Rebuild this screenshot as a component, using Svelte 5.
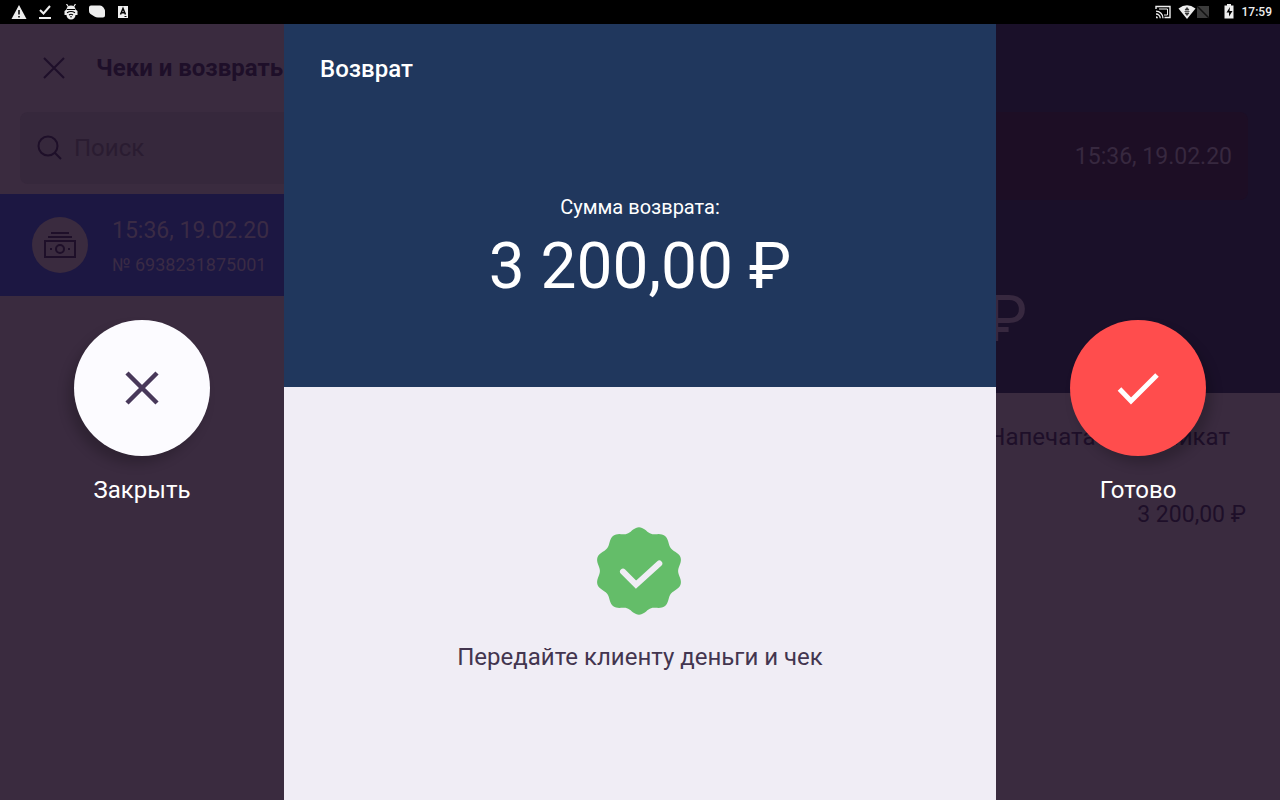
<script lang="ts">
	const total = '3 200,00 ₽'
	const receiptTime = '15:36, 19.02.20'

	// scalloped edge of the green badge
	function scallop(bumps: number, radius: number, depth: number) {
		const points: string[] = []
		for (let deg = 0; deg < 360; deg += 2) {
			const a = (deg * Math.PI) / 180
			const r = radius + depth * Math.cos(bumps * a)
			points.push(`${(43 + r * Math.sin(a)).toFixed(2)} ${(44 - r * Math.cos(a)).toFixed(2)}`)
		}
		return `M${points.join('L')}Z`
	}

	const badge = scallop(10, 41.4, 2.3)
</script>

<div class="app">
	<div class="status">
		<div class="notifications">
			<svg width="16" height="16" viewBox="0 0 16 16">
				<path d="M8 1 15.5 15H.5Z" fill="#eee" />
				<path d="M8 6v4.5M8 12v1.6" stroke="#000" stroke-width="1.5" />
			</svg>
			<svg width="16" height="16" viewBox="0 0 16 16" fill="none" stroke="#eee" stroke-width="2">
				<path d="m3 6 3.500 3.500L13 2M2 14h12" />
			</svg>
			<svg width="16" height="16" viewBox="0 0 16 16">
				<path d="M3.500 0l2 3M12.500 0l-2 3" stroke="#eee" stroke-width="1.2" />
				<path d="M3.500 5.500a4.500 4 0 0 1 9 0l2 1.500v4h-2a4.500 4.500 0 0 1-9 0h-2V7z" fill="#eee" />
				<path d="M4 5.500h8M4 8.800q4-2.600 8 0M6 11q2-1.400 4 0" fill="none" stroke="#000" stroke-width="1.100" />
				<circle cx="8" cy="12.800" r=".8" fill="#000" />
			</svg>
			<svg width="16" height="16" viewBox="0 0 16 16">
				<path d="M2 1.500h9q2 0 3.500 2T16 7.500v4q0 2-2 2H9q-2 0-3.500-1L1.500 10Q0 9 0 7V3.500q0-2 2-2z" fill="#eee" />
			</svg>
			<svg width="16" height="16" viewBox="0 0 16 16">
				<path d="M3 2h10v12H3z" fill="#eee" />
				<path d="m5.500 10.500 2.500-6 2.500 6M6.500 8.800h3" fill="none" stroke="#000" stroke-width="1.500" />
				<path d="M9.500 12.500h2" stroke="#000" />
			</svg>
		</div>
		<div class="system">
			<svg width="16" height="16" viewBox="0 0 16 16" fill="none" stroke="#eee">
				<path d="M1 5V2.500h14v11H9.500" stroke-width="1.400" />
				<path d="M1 7.200a7 7 0 0 1 7 7M1 10a4.200 4.200 0 0 1 4.200 4.200" stroke-width="1.300" />
				<path d="M1 12.200a2 2 0 0 1 2 2H1z" fill="#eee" stroke="none" />
				<path d="M4 5h8.500v6H9" stroke-width="1" />
			</svg>
			<svg class="wifi" width="34" height="16" viewBox="0 0 34 16">
				<path d="M9 15 .5 4.500Q9-2 17.500 4.500z" fill="#eee" />
				<path d="M9 3.500 7 6h4zM9 11.500 7 9h4zM6.500 7.500h5" fill="#333" stroke="#333" stroke-width=".8" />
				<path d="M19 2v12h12V2z" fill="#3c3c3c" />
				<path d="M19 2l12 12" stroke="#111" stroke-width="1.500" />
			</svg>
			<svg width="12" height="16" viewBox="0 0 12 16">
				<path d="M4 0h4v1.500h2.500v13h-9v-13H4z" fill="#eee" />
				<path d="M7 3 3.500 8.500H6v4L9.500 7h-3z" fill="#000" />
			</svg>
			<time>17:59</time>
		</div>
	</div>

	<div class="screen">
		<div class="under" inert>
			<div class="list">
				<header>
					<button aria-label="Назад">
						<svg width="24" height="24" viewBox="0 0 24 24" fill="none" stroke="currentColor" stroke-width="2">
							<path d="m2 2 20 20M22 2 2 22" />
						</svg>
					</button>
					<h2>Чеки и возвраты</h2>
				</header>
				<label class="search">
					<svg width="26" height="26" viewBox="0 0 26 26" fill="none" stroke="currentColor" stroke-width="2">
						<circle cx="11" cy="11" r="9.500" />
						<path d="m18 18 6 6" />
					</svg>
					<input type="search" placeholder="Поиск" />
				</label>
				<a class="receipt" href="#receipt">
					<span class="cash">
						<svg width="34" height="28" viewBox="0 0 34 28" fill="none" stroke="currentColor" stroke-width="2">
							<path d="M8 2h18M5 6h24M2 10h30v16H2z" />
							<circle cx="17" cy="18" r="4" />
							<path d="M7 18h2M25 18h2" />
						</svg>
					</span>
					<span class="about">
						<span class="time">{receiptTime}</span>
						<span class="number">№ 6938231875001</span>
					</span>
				</a>
			</div>
			<div class="detail" id="receipt">
				<div class="summary">
					<p class="stamp">{receiptTime}</p>
					<p class="sum">{total}</p>
				</div>
				<button class="print">Напечатать дубликат</button>
				<p class="line">{total}</p>
			</div>
		</div>

		<div class="over">
			<div class="side left">
				<button id="close" class="round" aria-labelledby="close-label">
					<svg width="40" height="40" viewBox="0 0 40 40" fill="none" stroke="currentColor" stroke-width="4.500">
						<path d="m5 5 30 30M35 5 5 35" />
					</svg>
				</button>
				<label id="close-label" for="close">Закрыть</label>
			</div>
			<main>
				<section class="amount">
					<h1>Возврат</h1>
					<p class="caption">Сумма возврата:</p>
					<p class="sum">{total}</p>
				</section>
				<section class="result">
					<svg width="88" height="88" viewBox="0 0 88 88">
						<path d={badge} fill="#64bd69" />
						<path d="m27 44.700 13 13 23.300-21.200" fill="none" stroke="#f0edf5" stroke-width="6" stroke-linecap="round" />
					</svg>
					<p>Передайте клиенту деньги и чек</p>
				</section>
			</main>
			<div class="side right">
				<button id="done" class="round" aria-labelledby="done-label">
					<svg width="48" height="40" viewBox="0 0 48 40" fill="none" stroke="currentColor" stroke-width="5">
						<path d="m5.500 21 11.500 12L43 7" />
					</svg>
				</button>
				<label id="done-label" for="done">Готово</label>
			</div>
		</div>
	</div>
</div>

<style>
	:global(body) {
		margin: 0;
		background: #3a2b3f;
	}

	.app {
		display: flex;
		flex-direction: column;
		min-height: 100vh;
		font-family: Roboto, 'Noto Sans', sans-serif;
		font-size: 24px;
		line-height: 28px;
		color: #fff;
	}

	h1,
	h2,
	p {
		margin: 0;
		font-size: 24px;
		font-weight: 500;
	}

	h2 {
		font-weight: 700;
	}

	p {
		font-weight: 400;
	}

	button {
		padding: 0;
		border: 0;
		background: none;
		color: inherit;
		font: inherit;
		cursor: pointer;
	}

	svg {
		display: block;
		flex: none;
	}

	.status {
		display: flex;
		justify-content: space-between;
		align-items: center;
		height: 24px;
		padding: 0 8px 0 11px;
		background: #000;
	}

	.notifications,
	.system {
		display: flex;
		align-items: center;
		gap: 10px;
	}

	.system {
		gap: 7px;
	}

	.wifi {
		margin-right: 4px;
	}

	time {
		font-size: 12px;
		font-weight: 500;
		line-height: 16px;
		color: #eee;
	}

	.screen {
		flex: 1;
		display: grid;
		overflow: hidden;
	}

	.under,
	.over {
		grid-area: 1 / 1;
		display: grid;
	}

	/* the dimmed receipts page */
	.under {
		grid-template-columns: 472px 1fr;
		color: #1e0f29;
	}

	header {
		display: flex;
		align-items: center;
		gap: 30px;
		height: 88px;
		padding-left: 42px;
	}

	.search {
		display: flex;
		align-items: center;
		gap: 11px;
		height: 72px;
		margin: 0 20px 10px;
		padding-left: 17px;
		border-radius: 8px;
		background: #36283c;
	}

	input {
		flex: 1;
		min-width: 0;
		padding: 0;
		border: 0;
		background: none;
		font: inherit;
	}

	input::placeholder {
		color: #2a1c31;
		opacity: 1;
	}

	.receipt {
		box-sizing: border-box;
		display: flex;
		align-items: center;
		gap: 24px;
		height: 102px;
		padding: 0 32px;
		background: #1c1742;
		color: #3a2b45;
		text-decoration: none;
	}

	.cash {
		display: grid;
		place-items: center;
		width: 56px;
		height: 56px;
		border-radius: 50%;
		background: #3a2b3f;
		color: #1e0f29;
	}

	.about {
		display: grid;
		gap: 8px;
		padding-top: 4px;
	}

	.time,
	.stamp,
	.line {
		font-size: 23px;
	}

	.number {
		font-size: 18px;
		line-height: 24px;
	}

	.detail {
		display: flex;
		flex-direction: column;
		align-items: flex-end;
	}

	.summary {
		box-sizing: border-box;
		width: 100%;
		padding: 88px 32px 33px;
		background: #1a1029;
		color: #37283f;
		text-align: center;
	}

	.stamp {
		padding: 31px 16px 29px;
		border-radius: 8px;
		background: #1d0e25;
		text-align: right;
	}

	.sum {
		font-size: 64px;
		line-height: 80px;
	}

	.summary .sum {
		margin-top: 80px;
	}

	.print {
		margin: 30px 50px 50px;
	}

	.line {
		padding-right: 34px;
	}

	.over {
		z-index: 1;
		grid-template-columns: 284px 1fr 284px;
	}

	.side {
		display: flex;
		flex-direction: column;
		align-items: center;
		justify-content: center;
		gap: 20px;
	}

	.round {
		display: grid;
		place-items: center;
		width: 136px;
		height: 136px;
		border-radius: 50%;
		background: #fcfbff;
		color: #48385a;
		box-shadow: -6px 8px 12px rgb(0 0 0 / 0.2);
	}

	.right .round {
		background: #ff4d4d;
		color: #fff;
		box-shadow: 6px 8px 12px rgb(0 0 0 / 0.2);
	}

	main {
		display: flex;
		flex-direction: column;
		text-align: center;
	}

	.amount {
		padding: 31px 36px 80px;
		background: #20375d;
	}

	h1 {
		margin-bottom: 112px;
		text-align: left;
	}

	.caption {
		margin-bottom: 8px;
		font-size: 20px;
		line-height: 24px;
	}

	.result {
		flex: 1;
		display: flex;
		flex-direction: column;
		align-items: center;
		justify-content: center;
		gap: 28px;
		padding-top: 10px;
		background: #f0edf5;
		color: #43354f;
	}
</style>
